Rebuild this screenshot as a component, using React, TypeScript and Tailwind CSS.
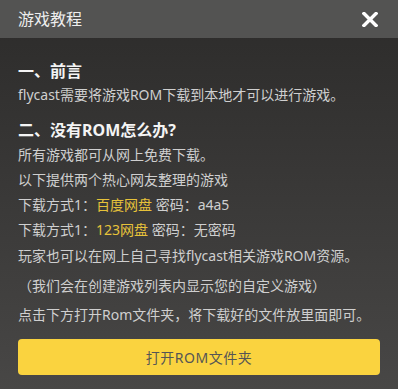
const App = () => {
  return (
    <div
      className="w-[398px] h-[389px] flex flex-col overflow-hidden bg-linear-to-b from-[#2c2b2a] to-[#484746]"
      style={{ fontFamily: '"Noto Sans", "Noto Sans CJK SC", sans-serif' }}
    >
      <div className="h-[38px] shrink-0 bg-[#535352] flex items-center justify-between pl-[18px] pr-[20px]">
        <span className="text-[16px] text-[#eeeeee] leading-none">游戏教程</span>
        <svg width="16" height="15" viewBox="0 0 16 15" className="mt-[1px]">
          <path d="M2 1.5 L14 13.5 M14 1.5 L2 13.5" stroke="#ffffff" strokeWidth="3.4" strokeLinecap="square" />
        </svg>
      </div>

      <div className="flex flex-col px-[18px] pt-[21px] text-[14px] text-[#cfcfcf]">
        <h2 className="text-[16px] font-bold text-[#f4f4f4] leading-6">一、前言</h2>
        <p className="leading-6">flycast需要将游戏ROM下载到本地才可以进行游戏。</p>
        <h2 className="mt-[11px] text-[16px] font-bold text-[#f4f4f4] leading-6">二、没有ROM怎么办?</h2>
        <p className="leading-[25px]">所有游戏都可从网上免费下载。</p>
        <p className="leading-[25px]">以下提供两个热心网友整理的游戏</p>
        <p className="leading-[25px]">
          下载方式1：<span className="text-[#e6c23a]">百度网盘</span> 密码：a4a5
        </p>
        <p className="leading-[25px]">
          下载方式1：<span className="text-[#e6c23a]">123网盘</span> 密码：无密码
        </p>
        <p className="mt-[1px] leading-[25px]">玩家也可以在网上自己寻找flycast相关游戏ROM资源。</p>
        <p className="mt-[5px] leading-[25px]">（我们会在创建游戏列表内显示您的自定义游戏）</p>
        <p className="mt-[4px] leading-[25px]">点击下方打开Rom文件夹，将下载好的文件放里面即可。</p>
        <button
          type="button"
          className="mt-[12px] h-[36px] w-full rounded-[4px] bg-[#fad33f] text-[14px] text-[#555555] tracking-[0.5px]"
        >
          打开ROM文件夹
        </button>
      </div>
    </div>
  );
};

export default App;
